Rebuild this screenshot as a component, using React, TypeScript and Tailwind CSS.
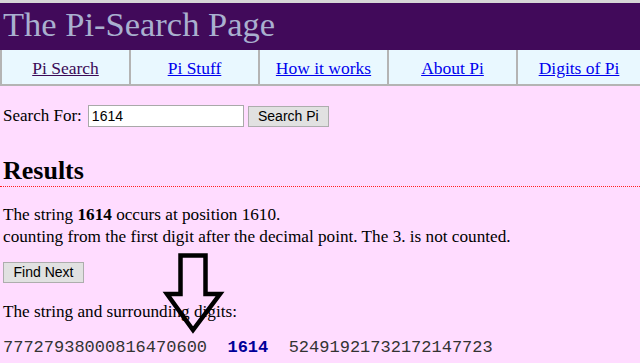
import React from "react";

const serif = { fontFamily: '"Liberation Serif", "Times New Roman", serif' };
const sans = { fontFamily: '"Liberation Sans", Arial, sans-serif' };
const mono = { fontFamily: '"Liberation Mono", "Courier New", monospace' };

const links = ["Pi Search", "Pi Stuff", "How it works", "About Pi", "Digits of Pi"];

export default function App() {
  return (
    <div className="relative w-[640px] h-[363px] overflow-hidden bg-[#ffdcff] text-black" style={serif}>
      <div className="border-t-[3px] border-[#d6d6d6] bg-[#410a5a] h-[50px] flex items-center pl-[3px]">
        <h1 className="text-[34.5px] leading-none text-[#a9b0cf] font-normal mt-[-4px]">The Pi-Search Page</h1>
      </div>
      <div className="grid grid-cols-[129px_129px_129px_129px_1fr] bg-[#e9f8ff] border-l-2 border-b-2 border-[#b4b4b4] h-[36px]">
        {links.map((l, i) => (
          <div
            key={l}
            className={`flex items-center justify-center text-[17.5px] pt-[2px] ${i < 4 ? "border-r-2 border-[#b4b4b4]" : ""}`}
          >
            <span className={`underline ${i === 0 ? "text-[#3b0a57]" : "text-[#0000ee]"}`}>{l}</span>
          </div>
        ))}
      </div>
      <div className="px-[3px]">
        <div className="flex items-center mt-[19px] h-[22px] text-[17px]">
          <span className="mr-[6px]">Search For:</span>
          <div className="w-[156px] h-[22px] bg-white border border-[#a9a9a9] flex items-center pl-[3px] text-[14px]" style={sans}>
            1614
          </div>
          <div className="ml-[4px] w-[81px] h-[21px] bg-[#e1e1e1] border border-[#adadad] flex items-center justify-center text-[14px] text-black" style={sans}>
            Search Pi
          </div>
        </div>
        <h2 className="mt-[29px] text-[26px] font-bold leading-[30px]">Results</h2>
      </div>
      <div className="border-t border-dotted border-[#ff2020] mt-[0px]" />
      <div className="px-[3px]">
        <p className="mt-[17px] text-[17.2px] leading-[22px]">
          The string <b>1614</b> occurs at position 1610.
          <br />
          counting from the first digit after the decimal point. The 3. is not counted.
        </p>
        <div className="mt-[14px] w-[81px] h-[21px] bg-[#e1e1e1] border border-[#adadad] flex items-center justify-center text-[14px]" style={sans}>
          Find Next
        </div>
        <p className="mt-[18px] text-[17.2px] leading-[22px]">The string and surrounding digits:</p>
        <p className="mt-[15px] text-[17px] leading-[20px] text-[#333333] whitespace-pre" style={mono}>
          77727938000816470600{"  "}<b className="text-[#000099]">1614</b>{"  "}52491921732172147723
        </p>
      </div>
      <svg className="absolute left-0 top-0 pointer-events-none" width="640" height="363">
        <polygon
          points="180.5,255.5 205.5,255.5 205.5,294 220,294 193,330 167,294 180.5,294"
          fill="none"
          stroke="#000"
          strokeWidth="4.5"
          strokeLinejoin="miter"
        />
      </svg>
    </div>
  );
}
